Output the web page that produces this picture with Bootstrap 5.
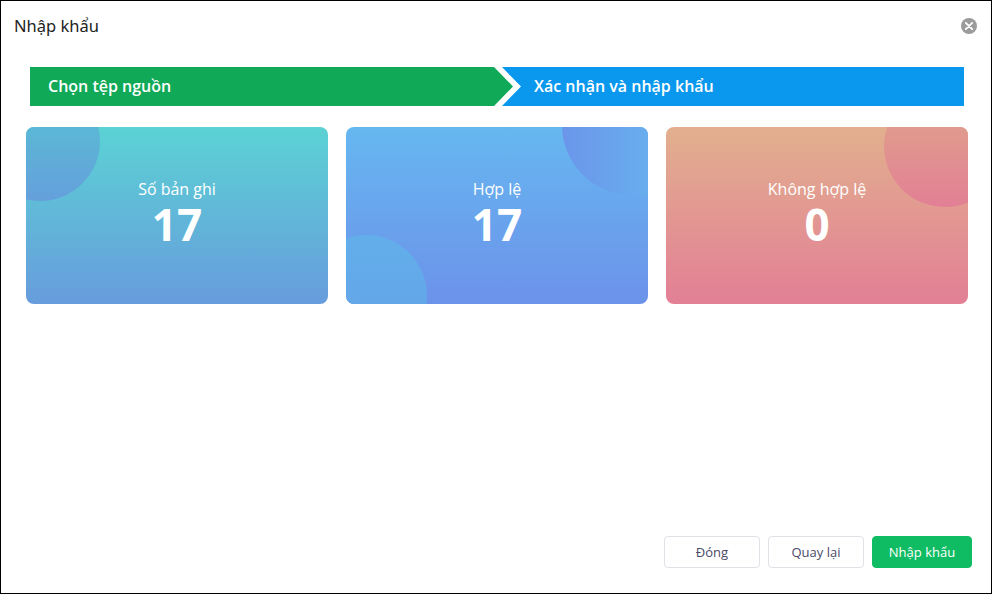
<!DOCTYPE html>
<html lang="vi">
<head>
<meta charset="utf-8">
<title>Nhập khẩu</title>
<link href="https://cdn.jsdelivr.net/npm/bootstrap@5.3.0/dist/css/bootstrap.min.css" rel="stylesheet">
<style>
html,body{height:100%;margin:0;background:#fff;font-family:"Open Sans","Noto Sans",sans-serif}
.win{height:594px;border:1px solid #000;background:#fff;overflow:hidden}
.win-head{height:50px;padding:0 14px 0 13px}
.win-title{font-family:"Noto Sans","Open Sans",sans-serif;font-size:16.5px;line-height:22px;color:#222;margin:0;font-weight:400}
.win-x{width:16px;height:16px;padding:0;border:0;background:none;line-height:0}
.steps{height:39px;margin:16px 27px 0 29px}
.step{height:39px;color:#fff;font-size:16px;font-weight:600;line-height:39px}
.step-a{width:483px;flex:none;background:#10a957;padding-left:18px;clip-path:polygon(0 0,464px 0,100% 50%,464px 100%,0 100%)}
.step-b{flex:1 1 auto;margin-left:-11px;background:#0a98ee;padding-left:32px;clip-path:polygon(0 0,100% 0,100% 100%,0 100%,19px 50%)}
.tiles{gap:18px;margin:21px 23px 0 25px}
.tile{flex:1 1 0;height:177px;border-radius:8px;color:#fff;position:relative;overflow:hidden}
.tile-1{background:linear-gradient(180deg,#5bd2d4,#679cdd)}
.tile-2{background:linear-gradient(180deg,#66b7f0,#6c92ea)}
.tile-3{background:linear-gradient(180deg,#e2b08e,#e27f95)}
.blob{position:absolute;border-radius:50%}
.b1{width:120px;height:120px;left:-46px;top:-46px;background:linear-gradient(180deg,#54c7d1,#659fdc)}
.b2{width:140px;height:140px;left:216px;top:-72px;background:linear-gradient(90deg,#6b95ea,#66bdf0)}
.b3{width:122px;height:122px;left:-41px;top:108px;background:linear-gradient(180deg,#62aeea,#65a2e9)}
.b4{width:122px;height:122px;left:218px;top:-42px;background:linear-gradient(180deg,#dfa989,#e27f95)}
.tile-body{position:relative;padding-top:52px;text-align:center}
.tile-label{font-size:16px;line-height:20px}
.tile-num{font-size:44px;font-weight:700;line-height:44px;margin-top:3px}
.win-foot{gap:8px;padding:0 19px 25px 0}
.act{height:32px;font-size:13px;font-weight:500;line-height:30px;padding:0;border-radius:4px;font-family:"Open Sans",sans-serif}
.act-g{width:96px;background:#fff;border:1px solid #e0e1e6;color:#4a4a68}
.act-p{width:100px;background:#10bc63;border:1px solid #10bc63;color:#fff}
</style>
</head>
<body>
<div class="win d-flex flex-column">
  <div class="win-head d-flex align-items-center justify-content-between">
    <h1 class="win-title">Nhập khẩu</h1>
    <button class="win-x" type="button" aria-label="Đóng">
      <svg width="16" height="16" viewBox="0 0 16 16"><circle cx="8" cy="8" r="8" fill="#9b9b9b"/><path d="M4.8 4.8l6.4 6.4M11.2 4.8l-6.4 6.4" stroke="#fff" stroke-width="1.8" stroke-linecap="round"/></svg>
    </button>
  </div>
  <div class="steps d-flex">
    <div class="step step-a">Chọn tệp nguồn</div>
    <div class="step step-b">Xác nhận và nhập khẩu</div>
  </div>
  <div class="tiles d-flex">
    <div class="tile tile-1">
      <div class="blob b1"></div>
      <div class="tile-body"><div class="tile-label">Số bản ghi</div><div class="tile-num">17</div></div>
    </div>
    <div class="tile tile-2">
      <div class="blob b2"></div><div class="blob b3"></div>
      <div class="tile-body"><div class="tile-label">Hợp lệ</div><div class="tile-num">17</div></div>
    </div>
    <div class="tile tile-3">
      <div class="blob b4"></div>
      <div class="tile-body"><div class="tile-label">Không hợp lệ</div><div class="tile-num">0</div></div>
    </div>
  </div>
  <div class="win-foot d-flex justify-content-end mt-auto">
    <button type="button" class="btn act act-g">Đóng</button>
    <button type="button" class="btn act act-g">Quay lại</button>
    <button type="button" class="btn act act-p">Nhập khẩu</button>
  </div>
</div>
<script src="https://cdn.jsdelivr.net/npm/bootstrap@5.3.0/dist/js/bootstrap.bundle.min.js"></script>
</body>
</html>
